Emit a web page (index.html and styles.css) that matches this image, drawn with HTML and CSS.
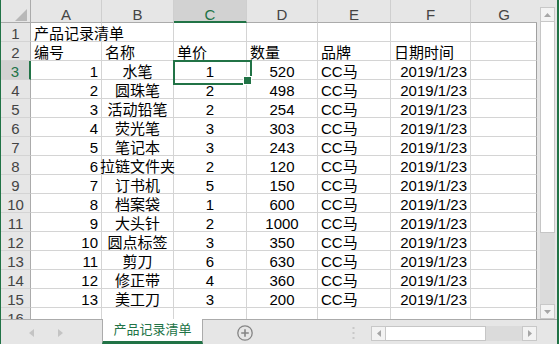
FILE: index.html
```html
<!DOCTYPE html>
<html lang="zh">
<head>
<meta charset="utf-8">
<link rel="stylesheet" href="styles.css">
</head>
<body>
<div class="app">
  <div class="main">
    <div class="sheet">
      <div class="grid">
        <div class="corner"><svg width="12" height="12" viewBox="0 0 12 12"><polygon points="12,0 12,12 0,12" fill="#b8b8b8"/></svg></div>
        <div class="ch">A</div><div class="ch">B</div><div class="ch sel">C</div><div class="ch">D</div><div class="ch">E</div><div class="ch">F</div><div class="ch last">G</div>

        <div class="rh">1</div><div class="cell l">产品记录清单</div><div class="cell"></div><div class="cell"></div><div class="cell"></div><div class="cell"></div><div class="cell"></div><div class="cell g"></div>
        <div class="rh">2</div><div class="cell l">编号</div><div class="cell l">名称</div><div class="cell l">单价</div><div class="cell l">数量</div><div class="cell l">品牌</div><div class="cell l">日期时间</div><div class="cell g"></div>
        <div class="rh sel">3</div><div class="cell r">1</div><div class="cell c">水笔</div><div class="cell c active">1</div><div class="cell c">520</div><div class="cell l">CC马</div><div class="cell r">2019/1/23</div><div class="cell g"></div>
        <div class="rh">4</div><div class="cell r">2</div><div class="cell c">圆珠笔</div><div class="cell c">2</div><div class="cell c">498</div><div class="cell l">CC马</div><div class="cell r">2019/1/23</div><div class="cell g"></div>
        <div class="rh">5</div><div class="cell r">3</div><div class="cell c">活动铅笔</div><div class="cell c">2</div><div class="cell c">254</div><div class="cell l">CC马</div><div class="cell r">2019/1/23</div><div class="cell g"></div>
        <div class="rh">6</div><div class="cell r">4</div><div class="cell c">荧光笔</div><div class="cell c">3</div><div class="cell c">303</div><div class="cell l">CC马</div><div class="cell r">2019/1/23</div><div class="cell g"></div>
        <div class="rh">7</div><div class="cell r">5</div><div class="cell c">笔记本</div><div class="cell c">3</div><div class="cell c">243</div><div class="cell l">CC马</div><div class="cell r">2019/1/23</div><div class="cell g"></div>
        <div class="rh">8</div><div class="cell r">6</div><div class="cell c">拉链文件夹</div><div class="cell c">2</div><div class="cell c">120</div><div class="cell l">CC马</div><div class="cell r">2019/1/23</div><div class="cell g"></div>
        <div class="rh">9</div><div class="cell r">7</div><div class="cell c">订书机</div><div class="cell c">5</div><div class="cell c">150</div><div class="cell l">CC马</div><div class="cell r">2019/1/23</div><div class="cell g"></div>
        <div class="rh">10</div><div class="cell r">8</div><div class="cell c">档案袋</div><div class="cell c">1</div><div class="cell c">600</div><div class="cell l">CC马</div><div class="cell r">2019/1/23</div><div class="cell g"></div>
        <div class="rh">11</div><div class="cell r">9</div><div class="cell c">大头针</div><div class="cell c">2</div><div class="cell c">1000</div><div class="cell l">CC马</div><div class="cell r">2019/1/23</div><div class="cell g"></div>
        <div class="rh">12</div><div class="cell r">10</div><div class="cell c">圆点标签</div><div class="cell c">3</div><div class="cell c">350</div><div class="cell l">CC马</div><div class="cell r">2019/1/23</div><div class="cell g"></div>
        <div class="rh">13</div><div class="cell r">11</div><div class="cell c">剪刀</div><div class="cell c">6</div><div class="cell c">630</div><div class="cell l">CC马</div><div class="cell r">2019/1/23</div><div class="cell g"></div>
        <div class="rh">14</div><div class="cell r">12</div><div class="cell c">修正带</div><div class="cell c">4</div><div class="cell c">360</div><div class="cell l">CC马</div><div class="cell r">2019/1/23</div><div class="cell g"></div>
        <div class="rh">15</div><div class="cell r">13</div><div class="cell c">美工刀</div><div class="cell c">3</div><div class="cell c">200</div><div class="cell l">CC马</div><div class="cell r">2019/1/23</div><div class="cell g"></div>
        <div class="rh">16</div><div class="cell"></div><div class="cell"></div><div class="cell"></div><div class="cell"></div><div class="cell"></div><div class="cell"></div><div class="cell g"></div>
      </div>
    </div>
    <div class="vbar">
      <div class="sbtn"><svg width="7" height="4" viewBox="0 0 7 4"><polygon points="0,4 7,4 3.5,0" fill="#a6a6a6"/></svg></div>
      <div class="vthumb"></div>
      <div class="vtrack"></div>
      <div class="sbtn"><svg width="7" height="4" viewBox="0 0 7 4"><polygon points="0,0 7,0 3.5,4" fill="#a6a6a6"/></svg></div>
    </div>
  </div>
  <div class="tabbar">
    <div class="nav">
      <svg class="arr" width="5" height="8" viewBox="0 0 5 8"><polygon points="5,0 5,8 0,4" fill="#c4c4c4"/></svg>
      <svg class="arr" width="5" height="8" viewBox="0 0 5 8"><polygon points="0,0 0,8 5,4" fill="#c4c4c4"/></svg>
    </div>
    <div class="tab">产品记录清单</div>
    <div class="rest">
      <svg class="add" width="16" height="16" viewBox="0 0 16 16"><circle cx="8" cy="8" r="7.2" fill="none" stroke="#858585" stroke-width="1.3"/><path d="M8 4.2v7.6M4.2 8h7.6" stroke="#858585" stroke-width="1.6"/></svg>
      <svg class="grip" width="3" height="12" viewBox="0 0 3 12"><rect x="0.5" y="0" width="2" height="2" fill="#c8c8c8"/><rect x="0.5" y="5" width="2" height="2" fill="#c8c8c8"/><rect x="0.5" y="10" width="2" height="2" fill="#c8c8c8"/></svg>
      <div class="hscroll">
        <div class="hbtn"><svg width="4" height="7" viewBox="0 0 4 7"><polygon points="4,0 4,7 0,3.5" fill="#a6a6a6"/></svg></div>
        <div class="hthumb"></div>
        <div class="htrack"></div>
        <div class="hbtn"><svg width="4" height="7" viewBox="0 0 4 7"><polygon points="0,0 0,7 4,3.5" fill="#a6a6a6"/></svg></div>
      </div>
    </div>
  </div>
</div>
</body>
</html>
```

FILE: styles.css
```css
* { box-sizing: border-box; margin: 0; padding: 0; }
html, body { width: 559px; height: 344px; overflow: hidden; }
body {
  font-family: "Liberation Sans", "Noto Sans CJK SC", sans-serif;
  background: #e6e6e6;
  color: #000;
}
.app {
  width: 559px;
  height: 344px;
  display: flex;
  flex-direction: column;
  border-left: 1px solid #217346;
  border-right: 2px solid #217346;
  background: #e6e6e6;
}
.main { display: flex; height: 319px; }
.sheet {
  width: 536px;
  height: 319px;
  overflow: hidden;
  background: #fff;
}
.grid {
  display: grid;
  grid-template-columns: 30px 71px 72px 73px 71px 73px 80px 66px;
  grid-template-rows: 23px repeat(16, 19px);
  background: #fff;
}
.corner {
  background: #e6e6e6;
  border-right: 1px solid #ababab;
  border-bottom: 1px solid #ababab;
  display: flex;
  justify-content: flex-end;
  align-items: flex-end;
  padding: 0 3px 1px 0;
}
.corner svg { display: block; }
.ch {
  background: #e6e6e6;
  border-right: 1px solid #cfcfcf;
  border-bottom: 1px solid #ababab;
  font-size: 15px;
  line-height: 17px;
  padding-top: 6px;
  text-align: center;
  color: #444;
}
.ch.last { border-right: none; }
.ch.sel {
  background: #d2d2d2;
  color: #217346;
  border-bottom: 2px solid #217346;
}
.rh {
  background: #e6e6e6;
  border-right: 1px solid #ababab;
  border-bottom: 1px solid #d4d4d4;
  font-size: 15px;
  line-height: 17px;
  padding-top: 2px;
  text-align: center;
  color: #444;
}
.rh.sel {
  background: #d2d2d2;
  color: #217346;
  border-right: 2px solid #217346;
}
.cell {
  border-right: 1px solid #d4d4d4;
  border-bottom: 1px solid #d4d4d4;
  font-size: 15px;
  line-height: 17px;
  padding: 2px 3px 0;
  white-space: nowrap;
  display: flex;
  align-items: flex-start;
  min-width: 0;
}
.cell.l { justify-content: flex-start; }
.cell.r { justify-content: flex-end; }
.cell.c { justify-content: center; }
.cell.g { border-right-color: #a0a0a0; }
.cell.active { position: relative; }
.cell.active::before {
  content: "";
  position: absolute;
  left: -1px;
  top: -1px;
  width: 75px;
  height: 21px;
  border: 2px solid #217346;
  z-index: 2;
}
.cell.active::after {
  content: "";
  position: absolute;
  left: 69px;
  top: 15px;
  width: 7px;
  height: 7px;
  background: #217346;
  border: 1px solid #fff;
  z-index: 3;
}

/* vertical scrollbar */
.vbar {
  width: 20px;
  height: 319px;
  padding: 7px 2px 0 3px;
  display: flex;
  flex-direction: column;
}
.sbtn {
  width: 15px;
  height: 15px;
  flex: none;
  background: #f3f3f3;
  border: 1px solid #c8c8c8;
  display: flex;
  align-items: center;
  justify-content: center;
}
.sbtn svg, .hbtn svg { display: block; }
.vthumb {
  height: 211px;
  flex: none;
  background: #fff;
  border: 1px solid #c6c6c6;
  border-top: none;
}
.vtrack { flex: 1; background: #dbdbdb; }

/* sheet tab bar */
.tabbar { height: 25px; display: flex; }
.nav {
  width: 101px;
  border-top: 1px solid #ababab;
  display: flex;
  align-items: center;
  padding-left: 28px;
  gap: 24px;
}
.arr { display: block; margin-top: 1px; }
.tab {
  width: 101px;
  background: #fff;
  border-left: 1px solid #ababab;
  border-right: 1px solid #ababab;
  border-bottom: 3px solid #217346;
  color: #217346;
  font-size: 13px;
  line-height: 22px;
  text-align: center;
}
.rest {
  flex: 1;
  border-top: 1px solid #ababab;
  display: flex;
  align-items: flex-start;
}
.add { display: block; margin: 5px 0 0 34px; }
.grip { display: block; margin: 7px 0 0 99px; }
.hscroll {
  display: flex;
  margin: 6px 0 0 16px;
  height: 15px;
}
.hbtn {
  width: 15px;
  height: 15px;
  background: #f3f3f3;
  border: 1px solid #c8c8c8;
  display: flex;
  align-items: center;
  justify-content: center;
}
.hthumb {
  width: 100px;
  background: #fff;
  border: 1px solid #c6c6c6;
  border-left: none;
}
.htrack { width: 36px; background: #dbdbdb; }
```
